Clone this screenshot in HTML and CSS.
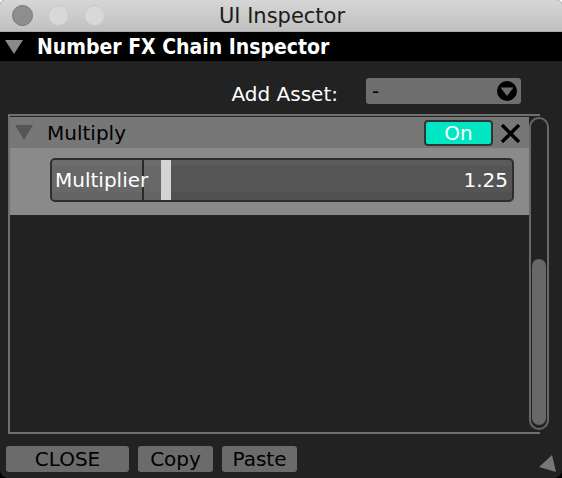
FILE: index.html
```html
<!DOCTYPE html>
<html>
<head>
<meta charset="utf-8">
<link rel="stylesheet" href="styles.css">
</head>
<body>
<div class="window">
  <div class="titlebar">
    <div class="lights">
      <span class="light light-close"></span>
      <span class="light"></span>
      <span class="light"></span>
    </div>
    <div class="title">UI Inspector</div>
    <div></div>
  </div>
  <div class="header">
    <svg class="tri" width="18" height="14" viewBox="0 0 18 14"><polygon points="0,0 18,0 9,14" fill="#8a8a8a"/></svg>
    <span class="header-text">Number FX Chain Inspector</span>
  </div>
  <div class="asset-row">
    <span class="asset-label">Add Asset:</span>
    <div class="dropdown">
      <span class="dropdown-value">-</span>
      <svg class="dropdown-icon" width="20" height="20" viewBox="0 0 20 20"><circle cx="10" cy="10" r="10" fill="#000"/><polygon points="3.5,6.5 16.5,6.5 10,15" fill="#6e6e6e"/></svg>
    </div>
  </div>
  <div class="panel">
    <div class="panel-content">
      <div class="fx-header">
        <svg class="fx-tri" width="18" height="15" viewBox="0 0 18 15"><polygon points="0,0 18,0 9,15" fill="#555"/></svg>
        <span class="fx-name">Multiply</span>
        <button class="on-btn">On</button>
        <svg class="close-x" width="21" height="19" viewBox="0 0 21 19"><path d="M2 1 L19 18 M19 1 L2 18" stroke="#000" stroke-width="3.4" fill="none"/></svg>
      </div>
      <div class="fx-body">
        <div class="slider">
          <div class="track">
            <div class="fill" style="width:109px"></div>
            <div class="handle"></div>
          </div>
          <div class="slider-label">Multiplier</div>
          <div class="slider-value">1.25</div>
        </div>
      </div>
    </div>
    <div class="scrollbar">
      <div class="thumb"></div>
    </div>
  </div>
  <div class="footer">
    <button class="btn btn-close">CLOSE</button>
    <button class="btn btn-small">Copy</button>
    <button class="btn btn-small">Paste</button>
  </div>
  <svg class="grip" width="18" height="18" viewBox="0 0 18 18"><polygon points="13,0 17,17 0,12" fill="#777"/></svg>
</div>
</body>
</html>
```

FILE: styles.css
```css
html {
  background: linear-gradient(#ffffff 50%, #000000 50%);
}
body {
  margin: 0;
  font-family: "DejaVu Sans", Verdana, sans-serif;
}
.window {
  position: relative;
  width: 562px;
  height: 478px;
  background: #222222;
  border-radius: 5px 5px 8px 8px;
  overflow: hidden;
  display: flex;
  flex-direction: column;
}
.titlebar {
  height: 32px;
  flex: none;
  display: grid;
  grid-template-columns: 1fr auto 1fr;
  align-items: center;
  background: linear-gradient(#d6d6d6, #c0c0c0);
  box-sizing: border-box;
  border-bottom: 1px solid #a9a9a9;
}
.lights {
  display: flex;
  gap: 15px;
  padding-left: 12px;
}
.light {
  width: 21px;
  height: 21px;
  border-radius: 50%;
  background: #d8d8d8;
  box-sizing: border-box;
  border: 1px solid #c8c8c8;
}
.light-close {
  background: #8e8e8e;
  border-color: #767676;
}
.title {
  font-family: "DejaVu Sans", sans-serif;
  font-size: 21px;
  color: #1a1a1a;
  line-height: 24px;
  padding-left: 2px;
}
.header {
  height: 29px;
  flex: none;
  background: #000;
  display: flex;
  align-items: center;
  padding-left: 5px;
}
.header .tri {
  margin-top: 1px;
}
.header-text {
  margin-left: 14px;
  font-family: "DejaVu Sans", sans-serif;
  font-weight: bold;
  font-stretch: condensed;
  font-size: 21px;
  color: #fff;
  line-height: 24px;
}
.asset-row {
  height: 53px;
  flex: none;
  box-sizing: border-box;
  padding-top: 17px;
  padding-right: 41px;
  display: flex;
  justify-content: flex-end;
  align-items: flex-start;
}
.asset-label {
  color: #fff;
  font-size: 20px;
  line-height: 24px;
  margin-top: 4px;
  margin-right: 28px;
}
.dropdown {
  width: 155px;
  height: 26px;
  background: #6e6e6e;
  border-radius: 3px;
  display: flex;
  align-items: center;
  justify-content: space-between;
  padding: 0 4px 0 6px;
  box-sizing: border-box;
}
.dropdown-value {
  font-size: 20px;
  line-height: 24px;
  color: #000;
}
.panel {
  margin-left: 8px;
  width: 532px;
  height: 320px;
  flex: none;
  box-sizing: border-box;
  border: 2px solid #6f6f6f;
  border-right: none;
  display: flex;
}
.panel-content {
  width: 519px;
  padding-top: 1px;
  flex: none;
}
.fx-header {
  height: 31px;
  background: #777777;
  display: flex;
  align-items: center;
  padding-left: 5px;
  padding-right: 8px;
}
.fx-name {
  margin-left: 14px;
  font-size: 20px;
  line-height: 24px;
  color: #000;
  flex: 1;
}
.on-btn {
  width: 69px;
  height: 26px;
  margin-right: 7px;
  background: #00e6c3;
  border: 2px solid #333;
  border-radius: 4px;
  color: #fff;
  font-family: "DejaVu Sans", sans-serif;
  font-size: 20px;
  line-height: 20px;
  padding: 0;
}
.close-x {
  margin-top: 1px;
}
.fx-body {
  height: 67px;
  background: #8a8a8a;
  box-sizing: border-box;
  padding: 10px 15px 0 40px;
}
.slider {
  height: 44px;
  box-sizing: border-box;
  border: 2px solid #2e2e2e;
  border-radius: 5px;
  overflow: hidden;
  display: grid;
  background: linear-gradient(#5b5b5b 0%, #5b5b5b 15%, #555 15%, #555 80%, #515151 80%);
}
.slider > * {
  grid-area: 1 / 1;
}
.track {
  display: flex;
}
.fill {
  background: linear-gradient(#6c6c6c 0%, #6c6c6c 15%, #686868 15%, #686868 80%, #646464 80%);
}
.handle {
  width: 10px;
  background: #d4d4d4;
}
.slider-label {
  width: 87px;
  border-right: 2px solid #2a2a2a;
  color: #fff;
  font-size: 20px;
  line-height: 40px;
  padding-left: 3px;
  white-space: nowrap;
}
.slider-value {
  justify-self: end;
  color: #fff;
  font-size: 20px;
  line-height: 40px;
  padding-right: 4px;
}
.scrollbar {
  width: 20px;
  height: 313px;
  margin-top: 1px;
  margin-right: -9px;
  flex: none;
  box-sizing: border-box;
  border: 2px solid #686868;
  border-radius: 10px;
  display: flex;
  flex-direction: column;
  justify-content: flex-end;
  align-items: center;
  padding-bottom: 3px;
}
.thumb {
  width: 14px;
  height: 166px;
  background: #686868;
  border-radius: 7px;
}
.footer {
  flex: 1;
  display: flex;
  gap: 9px;
  padding: 12px 0 0 6px;
  align-items: flex-start;
}
.btn {
  height: 26px;
  background: #6b6b6b;
  border: none;
  border-radius: 3px;
  color: #000;
  font-family: "DejaVu Sans", sans-serif;
  font-size: 20px;
  line-height: 26px;
  padding: 0;
}
.btn-close {
  width: 123px;
}
.btn-small {
  width: 75px;
}
.grip {
  position: absolute;
  right: 5px;
  bottom: 5px;
}
```
